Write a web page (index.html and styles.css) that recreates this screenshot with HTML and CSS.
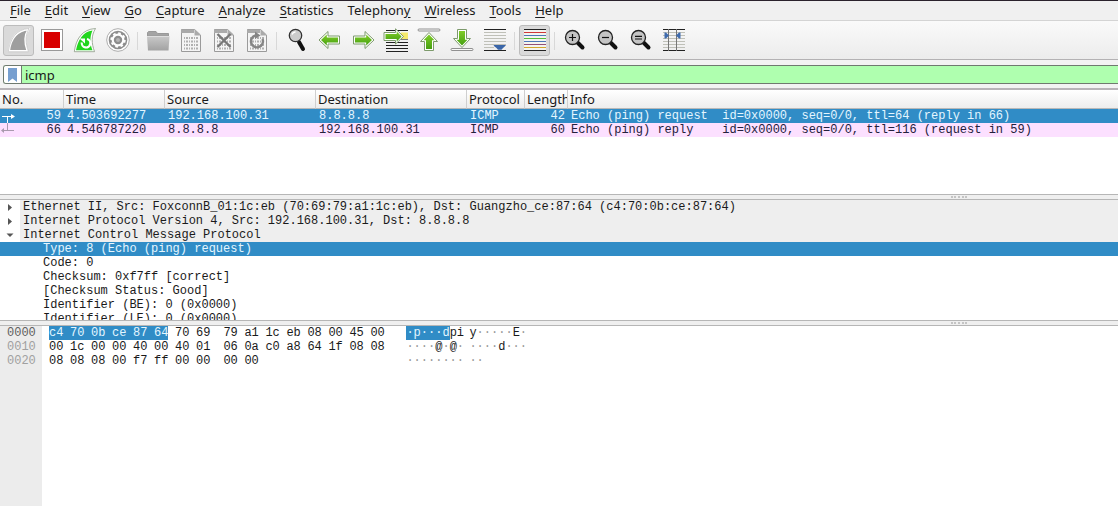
FILE: index.html
```html
<!DOCTYPE html>
<html lang="en">
<head>
<meta charset="utf-8">
<title>Packet analyzer</title>
<link rel="stylesheet" href="styles.css">
</head>
<body>
<svg class="defs" aria-hidden="true">
  <defs>
    <linearGradient id="green" x1="0" y1="0" x2="0" y2="1"><stop offset="0" stop-color="#80cc28"/><stop offset="1" stop-color="#45a010"/></linearGradient>
    <linearGradient id="grey" x1="0" y1="0" x2="0" y2="1"><stop offset="0" stop-color="#c8c8c8"/><stop offset="1" stop-color="#a2a2a2"/></linearGradient>
    <symbol id="page" viewBox="0 0 25 25">
      <path d="M3.500 1.500H16.500L22.500 7V23.500H3.500Z" fill="#f4f4f4" stroke="#9a9a9a"/>
      <path d="M16.500 1V7.500H23Z" fill="#aaa"/>
      <path d="M3 1.500H16V5H3Z" fill="#aaa"/>
      <g stroke="#b0b0b0" stroke-width="2" stroke-dasharray="1 1 2 1"><path d="M6 10H20M6 13.500H20M6 17H20M6 20.500H20"/></g>
    </symbol>
    <symbol id="lens" viewBox="0 0 25 25">
      <path d="M15.500 14.500L20.500 19.500" stroke="#111" stroke-width="4" stroke-linecap="round"/>
      <circle cx="10.500" cy="9.500" r="7" fill="#c4c4c4" stroke="#222" stroke-width="1.300"/>
    </symbol>
    <symbol id="arrow" viewBox="0 0 25 25">
      <path d="M24 12L15 3.500V8H3.500V16H15V20.500Z" fill="#fff" stroke="#7d9a6c" stroke-width="1" stroke-linejoin="round"/>
      <path d="M22 12L16.200 6.500V9.500H5V14.500H16.200V17.500Z" fill="url(#green)"/>
    </symbol>
  </defs>
</svg>
<nav class="menubar">
  <button><u>F</u>ile</button><button><u>E</u>dit</button><button><u>V</u>iew</button><button><u>G</u>o</button><button><u>C</u>apture</button><button><u>A</u>nalyze</button><button><u>S</u>tatistics</button><button>Telephon<u>y</u></button><button><u>W</u>ireless</button><button><u>T</u>ools</button><button><u>H</u>elp</button>
</nav>
<div class="toolbar" role="toolbar">
  <button class="tool active" aria-label="Start capture"><svg viewBox="0 0 25 25"><path d="M3 23C4.500 12 10 2.500 22.500 1.300C18 8 18.500 15 21.500 23Z" fill="#9e9e9e" stroke="#fff" stroke-width="2"/><path d="M2.300 23.700C4 11 10 1.300 23 .5C19 8 19.500 15 22.500 23.700Z" fill="none" stroke="#b5b5b5" stroke-width=".6"/></svg></button>
  <button class="tool" aria-label="Stop capture"><svg viewBox="0 0 25 25"><rect x="2.500" y="1.500" width="21" height="21" fill="#fff" stroke="#999"/><rect x="5" y="4" width="16" height="16" fill="#d80000"/></svg></button>
  <button class="tool" aria-label="Restart capture"><svg viewBox="0 0 25 25"><path d="M2.300 23.700C4 11 10 1.300 23.500 .5C19 8 19.500 15 22.500 23.700Z" fill="#fff" stroke="#8a9a84" stroke-width=".8"/><path d="M4 22.300C6 12 11 3.500 20.500 2.500C17.500 9 18 16 20.500 22.300Z" fill="#22d51e"/><path d="M9.800 14.500A4.300 4.300 0 1 0 15 11" fill="none" stroke="#fff" stroke-width="2.200"/><path d="M7.500 10.500H13V15.500Z" fill="#fff"/></svg></button>
  <button class="tool" aria-label="Capture options"><svg viewBox="0 0 25 25"><circle cx="13" cy="12" r="11.300" fill="#fff" stroke="#999" stroke-width=".8"/><circle cx="13" cy="12" r="9.300" fill="#8d8d8d"/><circle cx="13" cy="12" r="5.300" fill="none" stroke="#fff" stroke-width="2.200"/><circle cx="13" cy="12" r="6.800" fill="none" stroke="#fff" stroke-width="1.800" stroke-dasharray="2.670"/><circle cx="13" cy="12" r="2" fill="#b5b5b5"/></svg></button>
  <span class="sep"></span>
  <button class="tool" aria-label="Open file"><svg viewBox="0 0 25 25"><path d="M2.500 8V4.500L3.500 3.500H11L12.500 5.500H23.500V8Z" fill="#a4a4a4" stroke="#999"/><path d="M2 8.500H24.500L23.500 22.500H3Z" fill="url(#grey)"/><path d="M2 8.500H24.500" stroke="#dedede"/></svg></button>
  <button class="tool" aria-label="Save file"><svg viewBox="0 0 25 25"><use href="#page"/></svg></button>
  <button class="tool" aria-label="Close file"><svg viewBox="0 0 25 25"><use href="#page"/><path d="M6.500 6L19.500 19M19.500 6L6.500 19" stroke="#777" stroke-width="2.400"/></svg></button>
  <button class="tool" aria-label="Reload file"><svg viewBox="0 0 25 25"><use href="#page"/><path d="M18.500 11A6 6 0 1 1 11.500 7.500" fill="none" stroke="#858585" stroke-width="2.400"/><path d="M11 3.500L16.500 7.500L11 11Z" fill="#858585"/></svg></button>
  <span class="sep"></span>
  <button class="tool" aria-label="Find packet"><svg viewBox="0 0 25 25"><path d="M15 14L19 21" stroke="#111" stroke-width="4" stroke-linecap="round"/><circle cx="11.500" cy="7.500" r="6.200" fill="#ccc" stroke="#333" stroke-width="1.300"/><path d="M8 6.500Q9 4 11.500 4" fill="none" stroke="#fff" stroke-width="1.500"/></svg></button>
  <button class="tool" aria-label="Previous packet"><svg viewBox="0 0 25 25"><use href="#arrow" transform="matrix(-1 0 0 1 26 0)"/></svg></button>
  <button class="tool" aria-label="Next packet"><svg viewBox="0 0 25 25"><use href="#arrow"/></svg></button>
  <button class="tool" aria-label="Go to packet"><svg viewBox="0 0 25 25"><path d="M18 4.500H25V11H18Z" fill="#f5ea6c"/><path d="M3 2.500H25M3 14.500H25M3 17.500H25M3 20.500H25M3 23.500H25" stroke="#222"/><path d="M18 11.500H25" stroke="#777"/><path d="M20.500 8.500L12.500 .8V4.500H1V12.500H12.500V16Z" fill="#fff" stroke="#7d9a6c" stroke-linejoin="round"/><path d="M18.600 8.500L13.700 3.600V6H2.500V11H13.700V13.400Z" fill="url(#green)"/></svg></button>
  <button class="tool" aria-label="First packet"><svg viewBox="0 0 25 25"><rect x="2" y="1" width="22" height="2" rx="1" fill="#f8f8f8" stroke="#777" stroke-width=".8"/><path d="M13 4.500L21.500 13.500H17.500V22.500H8.500V13.500H4.500Z" fill="#fff" stroke="#7d9a6c" stroke-linejoin="round"/><path d="M13 6.500L18.500 12.200H16V21H10V12.200H7.500Z" fill="url(#green)"/></svg></button>
  <button class="tool" aria-label="Last packet"><svg viewBox="0 0 25 25"><rect x="2" y="20.500" width="22" height="2" rx="1" fill="#f8f8f8" stroke="#777" stroke-width=".8"/><path d="M13 19.500L21.500 10.500H17.500V1.500H8.500V10.500H4.500Z" fill="#fff" stroke="#7d9a6c" stroke-linejoin="round"/><path d="M13 17.500L18.500 11.800H16V3H10V11.800H7.500Z" fill="url(#green)"/></svg></button>
  <button class="tool" aria-label="Auto scroll"><svg viewBox="0 0 25 25"><path d="M2 1.500H24M2 22.500H24" stroke="#222"/><path d="M2 4.500H24M2 7.500H24M2 10.500H24M2 13.500H24M2 16.500H24M2 19.500H12" stroke="#bfc0b8"/><path d="M11.500 17H24Q23 18.500 21 20L19.500 21.800H16L14.500 20Q12 18.500 11.500 17Z" fill="#3b66a8"/></svg></button>
  <span class="sep"></span>
  <button class="tool active" aria-label="Colorize"><svg viewBox="0 0 25 25"><path d="M2 2H24V22H2Z" fill="#f4f4f0"/><path d="M2 1.500H24M2 22.500H24" stroke="#222"/><path d="M2 4.500H24" stroke="#d03838"/><path d="M2 7.500H24" stroke="#4d78b8"/><path d="M2 10.500H24" stroke="#55bd3b"/><path d="M2 13.500H24" stroke="#4d78b8"/><path d="M2 16.500H24" stroke="#925078"/><path d="M2 19.500H24" stroke="#d2a62e"/></svg></button>
  <span class="sep"></span>
  <button class="tool" aria-label="Zoom in"><svg viewBox="0 0 25 25"><use href="#lens"/><path d="M7 9.500H14M10.500 6V13" stroke="#111" stroke-width="1.200"/></svg></button>
  <button class="tool" aria-label="Zoom out"><svg viewBox="0 0 25 25"><use href="#lens"/><path d="M7 9.500H14" stroke="#111" stroke-width="1.200"/></svg></button>
  <button class="tool" aria-label="Normal size"><svg viewBox="0 0 25 25"><use href="#lens"/><path d="M7 8.300H14M7 11H14" stroke="#111" stroke-width="1.200"/></svg></button>
  <button class="tool" aria-label="Resize columns"><svg viewBox="0 0 25 25"><path d="M2 1.500H24M2 22.500H24" stroke="#222"/><path d="M2 4.500H24M2 7.500H24M2 10.500H24M2 13.500H24M2 16.500H24M2 19.500H24" stroke="#bfc0b8"/><path d="M7.500 1V23M15.500 1V23" stroke="#777"/><path d="M3.500 4.500H5L8 7.500L5 10.500H3.500ZM19.500 4.500H18L15 7.500L18 10.500H19.500Z" fill="#3f6bad"/></svg></button>
</div>
<form class="filterbar">
  <div class="filter">
    <button type="button" class="bookmark" aria-label="Filter bookmarks"><svg viewBox="0 0 9 14"><path d="M0 0H9V14L4.500 10.500L0 14Z" fill="#779fd0"/></svg></button>
    <input type="text" value="icmp" aria-label="Display filter" spellcheck="false">
  </div>
</form>
<main class="panes">
  <section class="packets">
    <table class="list">
      <colgroup><col class="c-no"><col class="c-time"><col class="c-addr"><col class="c-addr"><col class="c-proto"><col class="c-len"><col></colgroup>
      <thead><tr><th>No.</th><th>Time</th><th>Source</th><th>Destination</th><th>Protocol</th><th>Length</th><th>Info</th></tr></thead>
      <tbody>
        <tr class="selected"><td><div class="num"><svg viewBox="0 0 15 14"><path d="M2 7.500H13M7.500 7.500V14" stroke="#fff" fill="none"/><path d="M11 5L15 7.500L11 10Z" fill="#fff"/></svg>59</div></td><td>4.503692277</td><td>192.168.100.31</td><td>8.8.8.8</td><td>ICMP</td><td class="right">42</td><td>Echo (ping) request  id=0x0000, seq=0/0, ttl=64 (reply in 66)</td></tr>
        <tr class="icmp"><td><div class="num"><svg viewBox="0 0 15 14"><path d="M2 7.500H14M7.500 0V7.500" stroke="#a99aae" fill="none"/><path d="M4 5L1 7.500L4 10Z" fill="#a99aae"/></svg>66</div></td><td>4.546787220</td><td>8.8.8.8</td><td>192.168.100.31</td><td>ICMP</td><td class="right">60</td><td>Echo (ping) reply    id=0x0000, seq=0/0, ttl=116 (request in 59)</td></tr>
      </tbody>
    </table>
  </section>
  <div class="splitter"><span></span></div>
  <section class="details">
    <ul>
      <li class="top"><svg viewBox="0 0 20 14"><path d="M8 4L12 7.500L8 11Z" fill="#555"/></svg><span>Ethernet II, Src: FoxconnB_01:1c:eb (70:69:79:a1:1c:eb), Dst: Guangzho_ce:87:64 (c4:70:0b:ce:87:64)</span></li>
      <li class="top"><svg viewBox="0 0 20 14"><path d="M8 4L12 7.500L8 11Z" fill="#555"/></svg><span>Internet Protocol Version 4, Src: 192.168.100.31, Dst: 8.8.8.8</span></li>
      <li class="top"><svg viewBox="0 0 20 14"><path d="M6.500 5.500H13.500L10 9Z" fill="#555"/></svg><span>Internet Control Message Protocol</span></li>
      <li class="child selected">Type: 8 (Echo (ping) request)</li>
      <li class="child">Code: 0</li>
      <li class="child">Checksum: 0xf7ff [correct]</li>
      <li class="child">[Checksum Status: Good]</li>
      <li class="child">Identifier (BE): 0 (0x0000)</li>
      <li class="child">Identifier (LE): 0 (0x0000)</li>
    </ul>
  </section>
  <div class="splitter"><span></span></div>
  <section class="bytes">
    <div class="offsets"><span class="current">0000</span><span>0010</span><span>0020</span></div>
    <table class="hex">
      <tr><td class="hl">c4</td><td class="hl">70</td><td class="hl">0b</td><td class="hl">ce</td><td class="hl">87</td><td class="hl last">64</td><td>70</td><td class="mid">69</td><td>79</td><td>a1</td><td>1c</td><td>eb</td><td>08</td><td>00</td><td>45</td><td>00</td></tr>
      <tr><td>00</td><td>1c</td><td>00</td><td>00</td><td>40</td><td>00</td><td>40</td><td class="mid">01</td><td>06</td><td>0a</td><td>c0</td><td>a8</td><td>64</td><td>1f</td><td>08</td><td>08</td></tr>
      <tr><td>08</td><td>08</td><td>08</td><td>00</td><td>f7</td><td>ff</td><td>00</td><td class="mid">00</td><td>00</td><td>00</td></tr>
    </table>
    <div class="ascii">
      <span><mark>·p···d</mark>pi</span><span>y<i>·····</i>E<i>·</i></span>
      <span><i>····</i>@<i>·</i>@<i>·</i></span><span><i>····</i>d<i>···</i></span>
      <span><i>········</i></span><span><i>··</i></span>
    </div>
  </section>
</main>
</body>
</html>
```
FILE: styles.css
```css
* { box-sizing: border-box; }
body {
  margin: 0;
  height: 100vh;
  display: flex;
  flex-direction: column;
  overflow: hidden;
  background: #efefef;
  color: #1a1a1a;
  font: 13px/18px "Noto Sans", sans-serif;
}
button, input { font: inherit; color: inherit; margin: 0; }
button { padding: 0; border: 0; background: none; }
svg { display: block; }
.defs { position: absolute; width: 0; height: 0; }

.menubar {
  display: flex;
  gap: 14px;
  padding: 0 10px 1px;
  border-top: 1px solid #2a222c;
  border-bottom: 1px solid #d4d4d4;
  background: #f0f0f0;
}
.menubar button { white-space: nowrap; }
.menubar u { text-underline-offset: 2px; }

.toolbar {
  display: flex;
  align-items: center;
  gap: 2px;
  padding: 4px 3px 3px;
  border-bottom: 1px solid #b4b2b4;
  background: linear-gradient(#fafafa, #ececec);
}
.tool {
  width: 31px;
  height: 31px;
  padding: 2px;
  border: 1px solid transparent;
  border-radius: 3px;
}
.tool svg { width: 25px; height: 25px; }
.tool.active { background: #dadada; border-color: #bcbcbc; }
.sep { width: 1px; height: 18px; margin: 0 2px; background: #d8d8d8; }

.filterbar { padding: 5px 0 4px 3px; background: #f3f3f3; }
.filter {
  display: flex;
  border: 1px solid #6f7a6f;
  border-right: 0;
  border-radius: 3px 0 0 3px;
  background: #afffaf;
  overflow: hidden;
}
.bookmark { width: 18px; padding: 0 4px; background: #fff; border-right: 1px solid #6f7a6f; }
.bookmark svg { width: 9px; height: 14px; }
.filter input { flex: 1; height: 17px; padding: 0 3px; border: 0; outline: 0; background: transparent; }

.panes { flex: 1; min-height: 0; display: flex; flex-direction: column; background: #fff; }
.packets, .details, .bytes { font: 12px/14px "Liberation Mono", monospace; }
.packets { flex: 0 0 106px; border-top: 2px solid #b8b4b8; overflow: hidden; }
.list { width: 100%; table-layout: fixed; border-collapse: separate; border-spacing: 0; }
.c-no { width: 64px; }
.c-time { width: 101px; }
.c-addr { width: 151px; }
.c-proto { width: 58px; }
.c-len { width: 43px; }
.list th {
  height: 19px;
  padding: 0 0 0 2px;
  border-right: 1px solid #cfcfcf;
  border-bottom: 1px solid #b8b8b8;
  background: linear-gradient(#fff, #ededed);
  font: 13px/18px "Noto Sans", sans-serif;
  text-align: left;
  white-space: nowrap;
  overflow: hidden;
}
.list th:last-child { border-right: 0; }
.list td { height: 14px; padding: 0 3px; white-space: pre; overflow: hidden; }
.list td:first-child { padding-left: 0; }
.list .right { text-align: right; }
.num { display: flex; justify-content: space-between; }
.num svg { width: 15px; height: 14px; }
.selected { background: #308cc6; color: #e4f6ff; }
.icmp { background: #fce0ff; color: #24203c; }

.splitter {
  flex: 0 0 6px;
  display: flex;
  align-items: center;
  border: solid #b6b6b6;
  border-width: 1px 0;
  background: #efefef;
}
.splitter span { width: 16px; margin-left: 85.1%; border-top: 2px dotted #c4c4c4; }

.details { flex: 0 0 120px; overflow: hidden; }
.details ul { margin: 0; padding: 0; list-style: none; }
.details li { white-space: nowrap; }
.top { display: flex; }
.top svg { width: 20px; height: 14px; }
.top span { flex: 1; padding-left: 3px; background: #eee; }
.child { padding-left: 43px; }

.bytes { flex: 1; display: flex; align-items: stretch; overflow: hidden; }
.offsets { width: 42px; padding-left: 7px; background: #ececec; color: #a0a0a0; }
.offsets span { display: block; }
.offsets .current { color: #606060; }
.hex { align-self: flex-start; margin-left: 7px; border-collapse: collapse; }
.hex td { width: 21px; padding: 0 6px 0 0; }
.hex .mid { padding-right: 13px; }
.hex .hl { background: #308cc6; color: #e4f6ff; }
.hex .last { background: linear-gradient(to right, #308cc6 14px, transparent 14px); }
.ascii {
  display: grid;
  grid-template-columns: 63px 63px;
  grid-auto-rows: 14px;
  margin-left: 15px;
}
.ascii i { font-style: normal; color: #999; }
.ascii mark { background: #308cc6; color: #e4f6ff; }
```
